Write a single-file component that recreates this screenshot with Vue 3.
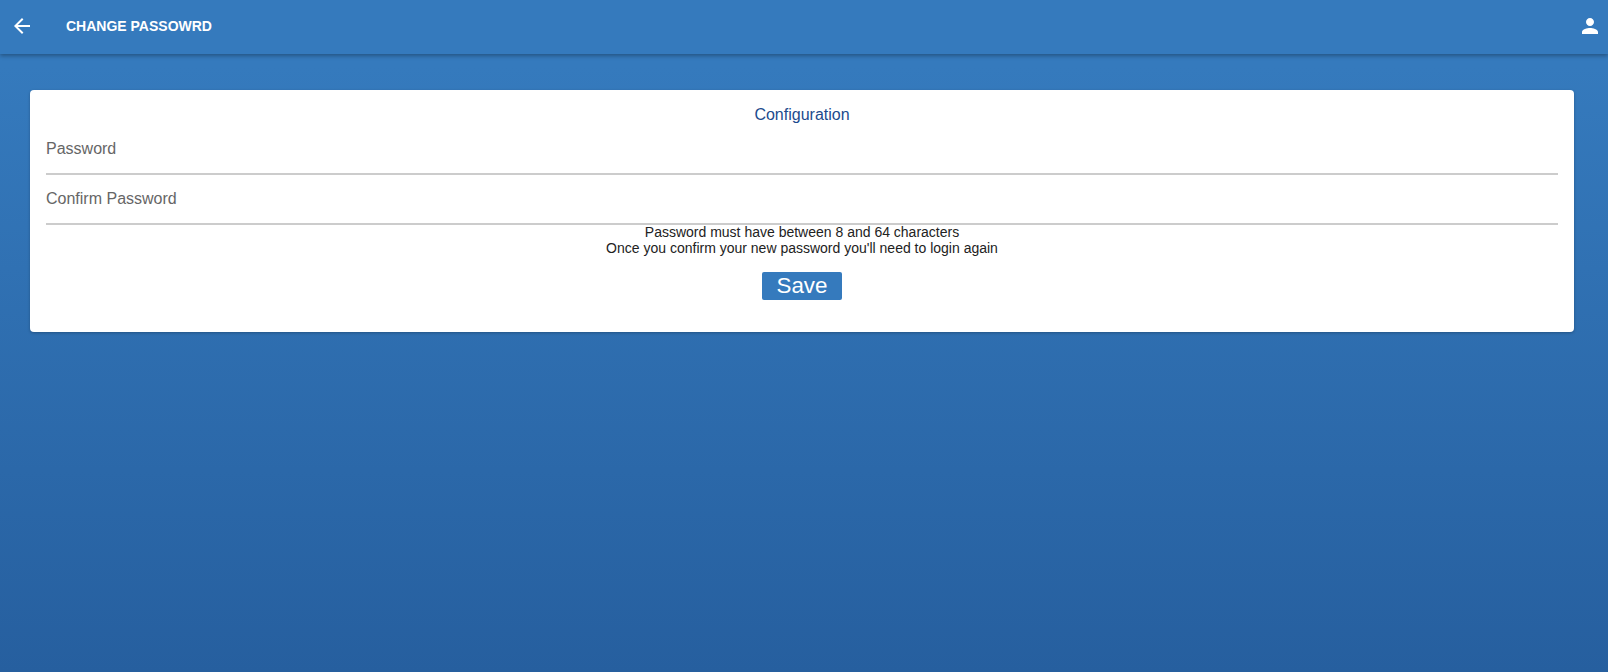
<template>
  <div class="page">
    <header class="bar">
      <svg class="back" viewBox="0 0 24 24" width="24" height="24"><path d="M20 11H7.83l5.59-5.59L12 4l-8 8 8 8 1.41-1.41L7.83 13H20v-2z" fill="#fff"/></svg>
      <div class="title">CHANGE PASSOWRD</div>
      <svg class="user" viewBox="0 0 24 24" width="24" height="24"><path d="M12 12c2.21 0 4-1.79 4-4s-1.79-4-4-4-4 1.79-4 4 1.79 4 4 4zm0 2c-2.67 0-8 1.34-8 4v2h16v-2c0-2.66-5.33-4-8-4z" fill="#fff"/></svg>
    </header>
    <main class="content">
      <section class="card">
        <h2 class="heading">Configuration</h2>
        <div class="field first"><span>Password</span></div>
        <div class="field"><span>Confirm Password</span></div>
        <div class="note">
          <div>Password must have between 8 and 64 characters</div>
          <div>Once you confirm your new password you'll need to login again</div>
        </div>
        <div class="actions"><button class="save" type="button">Save</button></div>
      </section>
    </main>
  </div>
</template>

<script setup>
</script>

<style>
html, body { margin: 0; padding: 0; }
</style>

<style scoped>
.page {
  width: 1608px;
  height: 672px;
  overflow: hidden;
  display: flex;
  flex-direction: column;
  background: linear-gradient(180deg, #357abd 0%, #357abd 10%, #265f9f 100%);
  font-family: "Liberation Sans", Arial, sans-serif;
}
.bar {
  height: 54px;
  flex: none;
  display: flex;
  align-items: center;
  padding-bottom: 2px;
  box-sizing: border-box;
  background: #357abd;
  box-shadow: 0 2px 4px rgba(0,0,0,.3);
  position: relative;
}
.back { margin-left: 10px; flex: none; }
.title {
  margin-left: 32px;
  flex: 1;
  color: #fff;
  font-size: 14px;
  font-weight: 700;
}
.user { margin-right: 6px; flex: none; }
.content { padding: 36px 34px 0 30px; }
.card {
  background: #fff;
  border-radius: 4px;
  box-shadow: 0 1px 3px rgba(0,0,0,.25);
  padding: 16px 16px 32px;
  height: 242px;
  box-sizing: border-box;
}
.heading {
  margin: 0;
  text-align: center;
  font-size: 16px;
  font-weight: 400;
  line-height: 18px;
  color: #1c4b8d;
}
.field {
  height: 50px;
  box-sizing: border-box;
  border-bottom: 2px solid #cccccc;
  color: #666;
  font-size: 16px;
  display: flex;
  align-items: flex-start;
}
.field.first { height: 51px; }
.field span { line-height: 18px; margin-top: 15px; }
.field.first span { margin-top: 16px; }
.note {
  margin-top: -1px;
  text-align: center;
  font-size: 14px;
  line-height: 16px;
  color: #222;
}
.actions { display: flex; justify-content: center; margin-top: 16px; }
.save {
  width: 80px;
  height: 28px;
  padding: 0;
  border: 0;
  border-radius: 2px;
  background: #357abd;
  color: #fff;
  font-family: inherit;
  font-size: 22.4px;
  line-height: 28px;
}
</style>
